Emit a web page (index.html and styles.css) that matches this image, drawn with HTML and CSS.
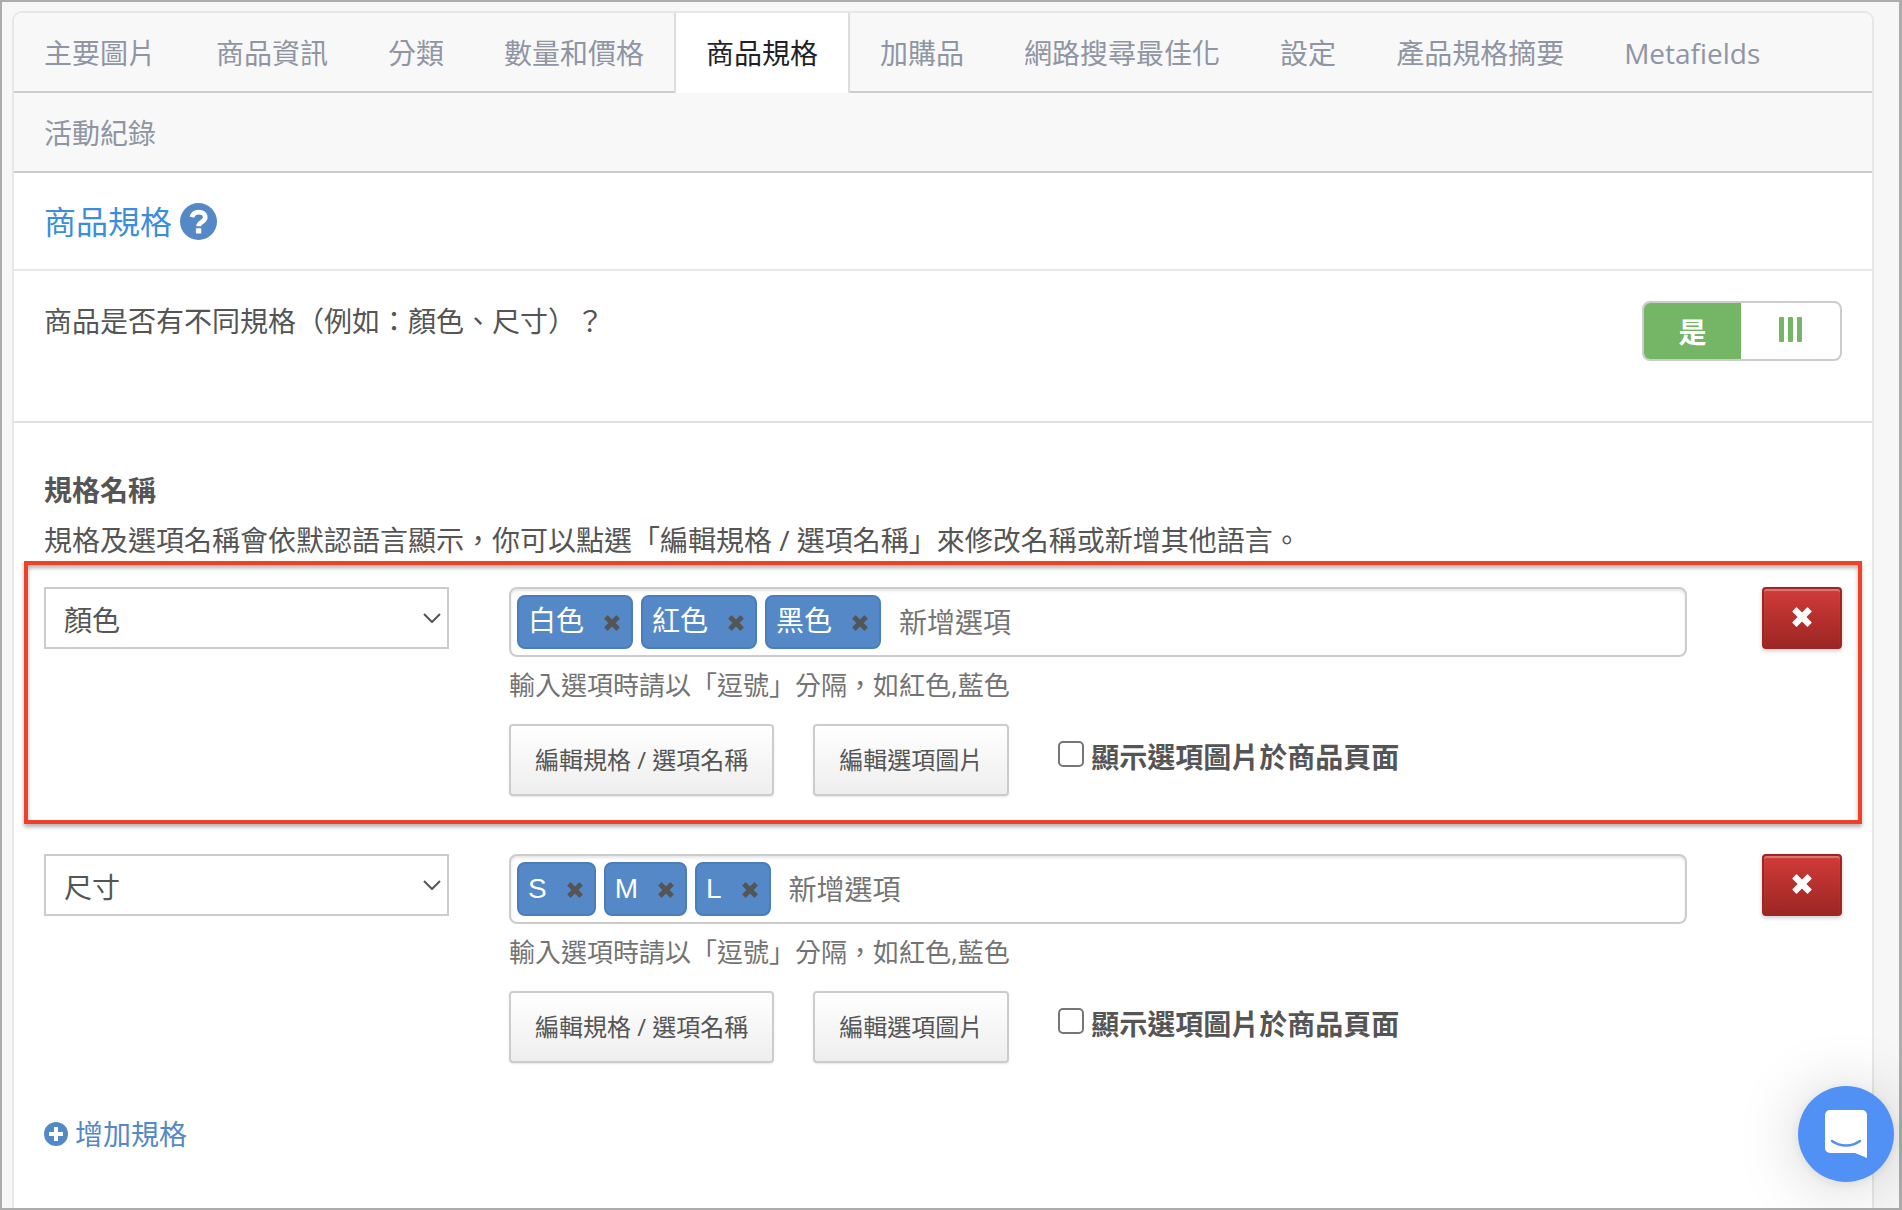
FILE: index.html
```
<!DOCTYPE html>
<html lang="zh-Hant">
<head>
  <meta charset="UTF-8">
  <meta name="viewport" content="width=device-width, initial-scale=1.0">
  <title>商品規格</title>
  <link rel="stylesheet" href="styles.css">
</head>
<body>
  <!-- shared icons -->
  <svg class="sprite" aria-hidden="true">
    <symbol id="icon-times" viewBox="0 0 20 20">
      <path d="M5 .6 10 5.6 15 .6Q15.5 .1 16 .6L19.4 4Q19.9 4.5 19.4 5L14.4 10 19.4 15Q19.9 15.5 19.4 16L16 19.4Q15.5 19.9 15 19.4L10 14.4 5 19.4Q4.500 19.9 4 19.4L.6 16Q.1 15.500 .6 15L5.600 10 .6 5Q.1 4.500 .6 4L4 .6Q4.500 .1 5 .6Z"/>
    </symbol>
    <symbol id="icon-chevron" viewBox="0 0 18 10">
      <path d="M1 1l8 8 8-8" fill="none" stroke="currentColor" stroke-width="2"/>
    </symbol>
  </svg>

  <main class="panel">
    <ul class="tabs">
      <li><a href="#images">主要圖片</a></li>
      <li><a href="#info">商品資訊</a></li>
      <li><a href="#category">分類</a></li>
      <li><a href="#price">數量和價格</a></li>
      <li class="active"><a href="#variations">商品規格</a></li>
      <li><a href="#addon">加購品</a></li>
      <li><a href="#seo">網路搜尋最佳化</a></li>
      <li><a href="#settings">設定</a></li>
      <li><a href="#summary">產品規格摘要</a></li>
      <li><a href="#metafields">Metafields</a></li>
      <li><a href="#logs">活動紀錄</a></li>
    </ul>

    <div class="panel-heading">
      <h1>商品規格</h1>
      <a class="help-link" href="#help" aria-label="說明">
        <svg viewBox="0 0 36 36" width="37" height="37">
          <circle cx="18" cy="18" r="18" fill="#5488c6"/>
          <path d="M11.600 13.800C12.500 10.500 14.800 8.800 18.100 8.800c3.700 0 6.500 2 6.500 5.100 0 4.800-6.500 4.300-6.500 8.600" fill="none" stroke="#fff" stroke-width="4.600"/>
          <rect x="15.500" y="24.500" width="5.200" height="5.200" rx=".6" fill="#fff"/>
        </svg>
      </a>
    </div>

    <div class="question">
      <p id="hasVariations">商品是否有不同規格（例如：顏色、尺寸）？</p>
      <label class="switch">
        <input type="checkbox" role="switch" aria-labelledby="hasVariations" checked>
        <span class="switch-on">是</span>
        <span class="switch-handle">
          <svg viewBox="0 0 23 25" width="23" height="25" fill="#75b566">
            <rect x="0" width="5" height="25" rx="1"/>
            <rect x="9" width="5" height="25" rx="1"/>
            <rect x="18" width="5" height="25" rx="1"/>
          </svg>
        </span>
      </label>
    </div>

    <div class="variations">
      <h2>規格名稱</h2>
      <p class="description">規格及選項名稱會依默認語言顯示，你可以點選「編輯規格 / 選項名稱」來修改名稱或新增其他語言。</p>

      <div class="variation highlighted">
        <div class="select-wrap">
          <select aria-label="規格名稱">
            <option>顏色</option>
            <option>尺寸</option>
          </select>
          <svg class="chevron" width="18" height="10"><use href="#icon-chevron"/></svg>
        </div>
        <div class="options">
          <div class="tag-box">
            <span class="tag">白色<button type="button" aria-label="移除白色"><svg width="16" height="16"><use href="#icon-times"/></svg></button></span>
            <span class="tag">紅色<button type="button" aria-label="移除紅色"><svg width="16" height="16"><use href="#icon-times"/></svg></button></span>
            <span class="tag">黑色<button type="button" aria-label="移除黑色"><svg width="16" height="16"><use href="#icon-times"/></svg></button></span>
            <input type="text" placeholder="新增選項" aria-label="新增選項">
          </div>
          <p class="hint">輸入選項時請以「逗號」分隔，如紅色,藍色</p>
          <div class="actions">
            <button type="button" class="btn">編輯規格 / 選項名稱</button>
            <button type="button" class="btn">編輯選項圖片</button>
            <label class="check"><input type="checkbox">顯示選項圖片於商品頁面</label>
          </div>
        </div>
        <button type="button" class="btn-delete" aria-label="刪除規格"><svg width="20" height="20"><use href="#icon-times"/></svg></button>
      </div>

      <div class="variation">
        <div class="select-wrap">
          <select aria-label="規格名稱">
            <option>尺寸</option>
            <option>顏色</option>
          </select>
          <svg class="chevron" width="18" height="10"><use href="#icon-chevron"/></svg>
        </div>
        <div class="options">
          <div class="tag-box">
            <span class="tag">S<button type="button" aria-label="移除S"><svg width="16" height="16"><use href="#icon-times"/></svg></button></span>
            <span class="tag">M<button type="button" aria-label="移除M"><svg width="16" height="16"><use href="#icon-times"/></svg></button></span>
            <span class="tag">L<button type="button" aria-label="移除L"><svg width="16" height="16"><use href="#icon-times"/></svg></button></span>
            <input type="text" placeholder="新增選項" aria-label="新增選項">
          </div>
          <p class="hint">輸入選項時請以「逗號」分隔，如紅色,藍色</p>
          <div class="actions">
            <button type="button" class="btn">編輯規格 / 選項名稱</button>
            <button type="button" class="btn">編輯選項圖片</button>
            <label class="check"><input type="checkbox">顯示選項圖片於商品頁面</label>
          </div>
        </div>
        <button type="button" class="btn-delete" aria-label="刪除規格"><svg width="20" height="20"><use href="#icon-times"/></svg></button>
      </div>

      <a class="add-link" href="#add">
        <svg viewBox="0 0 24 24" width="24" height="24">
          <circle cx="12" cy="12" r="12" fill="#5488c6"/>
          <path d="M12 5v14M5 12h14" stroke="#fff" stroke-width="4"/>
        </svg>
        增加規格
      </a>
    </div>
  </main>

  <button type="button" class="chat" aria-label="開啟對話">
    <svg viewBox="0 0 42 48" width="42" height="48">
      <path d="M5 0h32a5 5 0 0 1 5 5v43l-12-5H5a5 5 0 0 1-5-5V5a5 5 0 0 1 5-5z" fill="#fff"/>
      <path d="M7 31c8 6 20 6 28 0" fill="none" stroke="#5190f4" stroke-width="2.400" stroke-linecap="round"/>
    </svg>
  </button>
</body>
</html>
```

FILE: styles.css
```
* {
  box-sizing: border-box;
}

body {
  margin: 0;
  min-height: 100vh;
  display: flex;
  padding: 9px 25px 0 10px;
  border: 2px solid #acacac;
  border-right-width: 3px;
  background-color: #f7f7f7;
  color: #555;
  font-family: "Open Sans", "Noto Sans CJK TC", sans-serif;
  font-size: 28px;
  line-height: 40px;
}

h1, h2, p, ul {
  margin: 0;
  padding: 0;
}

a {
  color: #5488c6;
  text-decoration: none;
}

button, input, select {
  font-family: inherit;
  font-size: inherit;
  color: inherit;
}

svg {
  display: block;
}

.sprite {
  position: absolute;
  width: 0;
  height: 0;
}

.panel {
  flex: 1;
  min-width: 0;
  border: 2px solid #e7e7e7;
  border-bottom: 0;
  border-radius: 10px 10px 0 0;
  background-color: #fff;
  overflow: hidden;
}

/* tabs */
.tabs {
  display: flex;
  flex-wrap: wrap;
  list-style: none;
  background: repeating-linear-gradient(#f8f8f8 0 78px, #ccc 78px 80px);
}

.tabs a {
  display: block;
  height: 80px;
  padding: 20px 30px;
  color: #8f95a3;
}

.tabs .active a {
  background-color: #fff;
  border: solid #ddd;
  border-width: 0 2px;
  color: #1f2126;
}

/* heading */
.panel-heading {
  display: flex;
  align-items: center;
  gap: 8px;
  height: 98px;
  padding: 1px 30px 0;
  border-bottom: 2px solid #e7e7e7;
}

.panel-heading h1 {
  color: #3b8dde;
  font-size: 32px;
  font-weight: 400;
}

.question {
  display: flex;
  justify-content: space-between;
  padding: 30px 30px 60px;
  border-bottom: 2px solid #e0e0e0;
}

.switch {
  position: relative;
  display: flex;
  width: 200px;
  height: 60px;
  border: 2px solid #ccc;
  border-radius: 8px;
  overflow: hidden;
  cursor: pointer;
}

.switch input {
  position: absolute;
  opacity: 0;
}

.switch-on {
  flex: 1;
  background-color: #75b566;
  color: #fff;
  font-weight: 700;
  line-height: 58px;
  text-align: center;
}

.switch-handle {
  display: flex;
  justify-content: center;
  width: 99px;
  padding-top: 14px;
}

/* variations */
.variations {
  padding: 42px 30px;
}

.variations h2 {
  margin-bottom: 4px;
  font-size: 28px;
  line-height: 50px;
}

.description {
  line-height: 42px;
}

.variation {
  display: grid;
  grid-template-columns: 11fr 32fr 95px;
  column-gap: 60px;
  align-items: start;
  margin: 0 -20px 4px;
  padding: 22px 16px 24px;
  border: 4px solid transparent;
}

.highlighted {
  border-color: #ed4226;
  box-shadow: 0 3px 4px rgba(0, 0, 0, 0.3), inset 0 3px 4px rgba(0, 0, 0, 0.3);
}

.select-wrap {
  position: relative;
}

.select-wrap select {
  display: block;
  width: 100%;
  height: 62px;
  padding: 4px 18px 0;
  border: 2px solid #ccc;
  border-radius: 0;
  background-color: #fff;
  appearance: none;
}

.chevron {
  position: absolute;
  top: 26px;
  right: 8px;
  pointer-events: none;
}

.tag-box {
  display: flex;
  gap: 8px;
  height: 70px;
  padding: 6px;
  border: 2px solid #ccc;
  border-radius: 8px;
  box-shadow: inset 0 2px 3px rgba(0, 0, 0, 0.1);
}

.tag {
  display: flex;
  align-items: center;
  gap: 20px;
  height: 54px;
  padding: 0 11px 0 9px;
  border: 2px solid #497dbb;
  border-radius: 8px;
  background-color: #5488c6;
  color: #fff;
  font-family: "Liberation Sans", "Noto Sans CJK TC", sans-serif;
}

.tag button {
  padding: 2px 0 0;
  border: 0;
  background: none;
  color: #555;
  fill: currentColor;
}

.tag-box input {
  flex: 1;
  min-width: 0;
  padding: 0 10px;
  border: 0;
  background: none;
}

.tag-box input::placeholder {
  color: #757575;
}

.hint {
  margin: 10px 0 21px;
  color: #737373;
  font-size: 26px;
  line-height: 36px;
}

.actions {
  display: flex;
  gap: 39px;
}

.btn {
  height: 72px;
  padding: 0 24px 4px;
  border: 2px solid #ccc;
  border-radius: 4px;
  background: linear-gradient(#fff, #eee);
  box-shadow: 0 1px 2px rgba(0, 0, 0, 0.1);
  font-size: 24px;
}

.check {
  display: flex;
  align-items: center;
  gap: 7px;
  height: 66px;
  padding-left: 10px;
  font-weight: 700;
}

.check input {
  width: 26px;
  height: 26px;
  margin: 0 0 6px;
  border: 2px solid #767676;
  border-radius: 5px;
  background-color: #fff;
  appearance: none;
}

.btn-delete {
  display: flex;
  align-items: center;
  justify-content: center;
  justify-self: end;
  width: 80px;
  height: 62px;
  padding: 0 0 2px;
  border: 2px solid #9c2624;
  border-radius: 4px;
  background: linear-gradient(#d13b38, #9c2624);
  box-shadow: inset 0 2px 1px rgba(255, 255, 255, 0.3), 0 2px 4px rgba(0, 0, 0, 0.2);
  fill: #fff;
}

.add-link {
  display: inline-flex;
  align-items: center;
  gap: 7px;
  margin-top: 19px;
}

/* chat launcher */
.chat {
  position: fixed;
  right: 8px;
  bottom: 28px;
  display: flex;
  align-items: center;
  justify-content: center;
  width: 96px;
  height: 96px;
  border: 0;
  border-radius: 50%;
  background-color: #5190f4;
  box-shadow: 0 2px 12px rgba(0, 0, 0, 0.08), 0 4px 64px rgba(0, 0, 0, 0.18);
}
```
